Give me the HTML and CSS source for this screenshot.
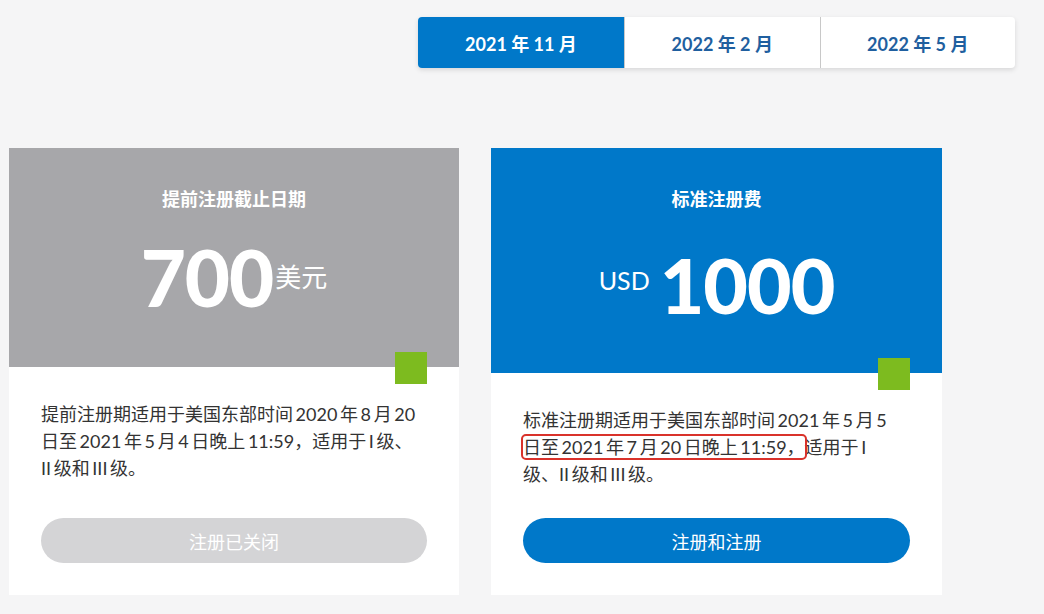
FILE: index.html
```html
<!DOCTYPE html>
<html lang="zh-CN">
<head>
  <meta charset="UTF-8">
  <meta name="viewport" content="width=device-width, initial-scale=1.0">
  <title>注册费用</title>
  <link rel="stylesheet" href="styles.css">
</head>
<body>
  <div class="page">
    <!-- Session tabs -->
    <nav class="tabs">
      <button class="tab active">2021 年 11 月</button>
      <button class="tab">2022 年 2 月</button>
      <button class="tab">2022 年 5 月</button>
    </nav>

    <div class="plans">
      <div class="plan">
        <div class="plan-head plan-head--grey">
          <h3>提前注册截止日期</h3>
          <div class="price"><span class="amount">700</span><span class="unit-after">美元</span></div>
          <span class="corner"></span>
        </div>
        <div class="plan-body">
          <p>提前注册期适用于美国东部时间 2020 年 8 月 20<br>日至 2021 年 5 月 4 日晚上 11:59，适用于 I 级、<br>II 级和 III 级。</p>
          <button class="btn btn-closed">注册已关闭</button>
        </div>
      </div>

      <div class="plan">
        <div class="plan-head plan-head--blue">
          <h3>标准注册费</h3>
          <div class="price"><span class="unit-before">USD</span><span class="amount">1000</span></div>
          <span class="corner"></span>
        </div>
        <div class="plan-body">
          <p>标准注册期适用于美国东部时间 2021 年 5 月 5<br><span class="mark">日至 2021 年 7 月 20 日晚上 11:59，</span>适用于 I<br>级、II 级和 III 级。</p>
          <button class="btn btn-open">注册和注册</button>
        </div>
      </div>
    </div>
  </div>
</body>
</html>
```

FILE: styles.css
```css
/* General Reset */
body, h3, p, button {
  margin: 0;
  padding: 0;
  box-sizing: border-box;
}

body {
  font-family: 'Lato', 'Noto Sans CJK SC', sans-serif;
  background-color: #f5f5f6;
  color: #333333;
}

.page {
  padding: 17px 29px 0 9px;
  height: 614px;
  box-sizing: border-box;
}

/* Tabs */
.tabs {
  display: flex;
  width: 597px;
  height: 51px;
  margin-left: auto;
  background-color: #ffffff;
  border-radius: 4px;
  box-shadow: 0 2px 5px rgba(0, 0, 0, 0.12);
  overflow: hidden;
}

.tab {
  flex: 1;
  border: none;
  background: none;
  font-family: inherit;
  font-size: 18px;
  font-weight: 700;
  color: #1f5f9f;
  cursor: pointer;
}

.tab + .tab {
  border-left: 1px solid #c8c8c8;
}

.tab.active {
  flex: 0 0 206px;
  background-color: #0078c9;
  color: #ffffff;
}

/* Plans */
.plans {
  display: flex;
  gap: 32px;
  margin-top: 80px;
}

.plan {
  width: 450px;
  height: 447px;
  display: flex;
  flex-direction: column;
  background-color: #ffffff;
}

.plan:last-child {
  width: 451px;
}

.plan-head {
  position: relative;
  height: 219px;
  padding-top: 39px;
  box-sizing: border-box;
  color: #ffffff;
  text-align: center;
}

.plan-head--grey {
  background-color: #a7a7aa;
}

.plan-head--blue {
  height: 225px;
  background-color: #0078c9;
}

.plan-head h3 {
  font-size: 18px;
  line-height: 24px;
  font-weight: 700;
}

.price {
  margin-top: 27px;
  line-height: 78px;
  height: 78px;
}

.plan-head--blue .price {
  margin-top: 30px;
}

.amount {
  font-size: 78px;
  font-weight: 900;
  letter-spacing: -1px;
}

.plan-head--blue .amount {
  font-size: 77px;
}

.unit-after {
  font-size: 26px;
  vertical-align: 20px;
  margin-left: 2px;
}

.unit-before {
  font-size: 25px;
  vertical-align: 24px;
  margin-right: 10px;
}

.corner {
  position: absolute;
  right: 32px;
  bottom: -17px;
  width: 32px;
  height: 32px;
  background-color: #7dbb1f;
}

.plan-body {
  flex: 1;
  display: flex;
  flex-direction: column;
  padding: 34px 32px 32px;
}

.plan-body p {
  font-size: 18px;
  line-height: 27px;
  white-space: nowrap;
  word-spacing: -2px;
}

.mark {
  outline: 2px solid #d9322b;
  outline-offset: 0;
  border-radius: 3px;
}

.btn {
  margin-top: auto;
  height: 45px;
  border: none;
  border-radius: 23px;
  font-family: inherit;
  font-size: 18px;
  color: #ffffff;
}

.btn-closed {
  background-color: #d4d4d6;
}

.btn-open {
  background-color: #0078c9;
  cursor: pointer;
}
```
